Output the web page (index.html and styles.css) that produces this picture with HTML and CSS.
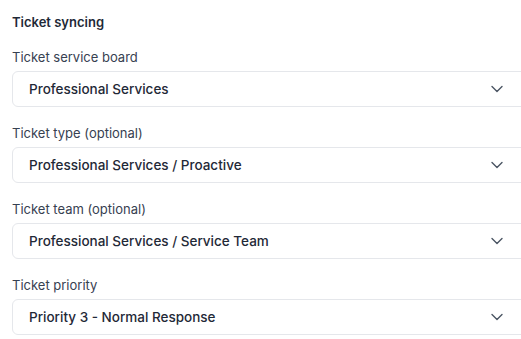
FILE: index.html
```html
<!DOCTYPE html>
<html lang="en">

<head>
    <meta charset="UTF-8">
    <meta name="viewport" content="width=device-width, initial-scale=1.0">
    <title>Ticket syncing</title>
    <link rel="stylesheet" href="styles.css">
</head>

<body>
    <div id="container">
        <h2 class="section-title">Ticket syncing</h2>

        <div class="field">
            <label class="field-label">Ticket service board</label>
            <div class="select">
                <span class="select-value">Professional Services</span>
                <svg class="chevron" width="12" height="12" viewBox="0 0 12 12" fill="none">
                    <path d="M1 3.5L6 8.5L11 3.5" stroke="#4b5563" stroke-width="1.4" stroke-linecap="round" stroke-linejoin="round" />
                </svg>
            </div>
        </div>

        <div class="field">
            <label class="field-label">Ticket type (optional)</label>
            <div class="select">
                <span class="select-value">Professional Services / Proactive</span>
                <svg class="chevron" width="12" height="12" viewBox="0 0 12 12" fill="none">
                    <path d="M1 3.5L6 8.5L11 3.5" stroke="#4b5563" stroke-width="1.4" stroke-linecap="round" stroke-linejoin="round" />
                </svg>
            </div>
        </div>

        <div class="field">
            <label class="field-label">Ticket team (optional)</label>
            <div class="select">
                <span class="select-value">Professional Services / Service Team</span>
                <svg class="chevron" width="12" height="12" viewBox="0 0 12 12" fill="none">
                    <path d="M1 3.5L6 8.5L11 3.5" stroke="#4b5563" stroke-width="1.4" stroke-linecap="round" stroke-linejoin="round" />
                </svg>
            </div>
        </div>

        <div class="field">
            <label class="field-label">Ticket priority</label>
            <div class="select">
                <span class="select-value">Priority 3 - Normal Response</span>
                <svg class="chevron" width="12" height="12" viewBox="0 0 12 12" fill="none">
                    <path d="M1 3.5L6 8.5L11 3.5" stroke="#4b5563" stroke-width="1.4" stroke-linecap="round" stroke-linejoin="round" />
                </svg>
            </div>
        </div>
    </div>
</body>

</html>
```

FILE: styles.css
```css
* {
    padding: 0;
    margin: 0;
    box-sizing: border-box;
    font-family: 'Inter', 'Liberation Sans', sans-serif;
}

body {
    background-color: #ffffff;
    overflow: hidden;
}

#container {
    width: 540px;
    padding: 13px 0 0 12px;
    display: flex;
    flex-direction: column;
    gap: 16px;
}

.section-title {
    font-size: 13px;
    font-weight: 600;
    line-height: 18px;
    color: #1f2937;
}

.field {
    display: flex;
    flex-direction: column;
    gap: 4px;
}

.field-label {
    font-size: 13px;
    line-height: 20px;
    color: #374151;
}

.select {
    height: 36px;
    border: 1px solid #e5e7eb;
    border-radius: 6px;
    display: flex;
    align-items: center;
    justify-content: space-between;
    padding: 0 36px 0 16px;
}

.select-value {
    font-size: 13.5px;
    font-weight: 500;
    color: #1f2937;
}

.chevron {
    display: block;
}
```
